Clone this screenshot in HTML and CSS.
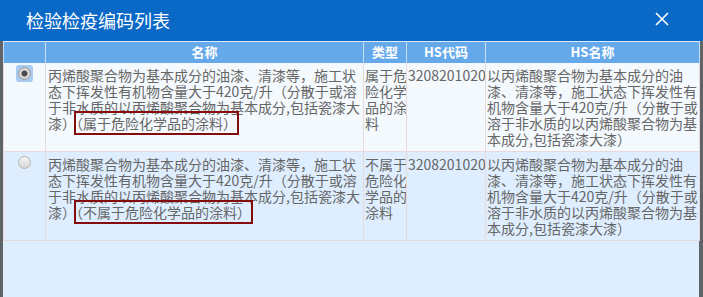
FILE: index.html
```html
<!DOCTYPE html>
<html lang="zh-CN">
<head>
	<meta charset="UTF-8">
	<title>检验检疫编码列表</title>
	<link rel="stylesheet" href="styles.css">
</head>
<body>

	<!-- Janela de diálogo -->
	<div class="dialogo">

		<div class="titulo">
			<span class="titulo-texto">检验检疫编码列表</span>
			<svg class="fechar" width="14" height="14" viewBox="0 0 14 14">
				<path d="M1 1 L13 13 M13 1 L1 13" stroke="#ffffff" stroke-width="1.6" fill="none"/>
			</svg>
		</div>

		<div class="corpo">
			<table class="grade">
				<colgroup>
					<col class="c-radio">
					<col class="c-nome">
					<col class="c-tipo">
					<col class="c-codigo">
					<col class="c-hsnome">
				</colgroup>
				<thead>
					<tr>
						<th></th>
						<th>名称</th>
						<th>类型</th>
						<th>HS代码</th>
						<th>HS名称</th>
					</tr>
				</thead>
				<tbody>
					<tr class="linha clara">
						<td class="radio-celula"><span class="anel"><span class="radio marcado"></span></span></td>
						<td>丙烯酸聚合物为基本成分的油漆、清漆等，施工状<br>态下挥发性有机物含量大于420克/升（分散于或溶<br>于非水质的以丙烯酸聚合物为基本成分,包括瓷漆大<br>漆）<span class="destaque">（属于危险化学品的涂料）</span></td>
						<td>属于危<br>险化学<br>品的涂<br>料</td>
						<td>3208201020</td>
						<td>以丙烯酸聚合物为基本成分的油<br>漆、清漆等，施工状态下挥发性有<br>机物含量大于420克/升（分散于或<br>溶于非水质的以丙烯酸聚合物为基<br>本成分,包括瓷漆大漆）</td>
					</tr>
					<tr class="linha azul">
						<td class="radio-celula"><span class="anel vazio"><span class="radio"></span></span></td>
						<td>丙烯酸聚合物为基本成分的油漆、清漆等，施工状<br>态下挥发性有机物含量大于420克/升（分散于或溶<br>于非水质的以丙烯酸聚合物为基本成分,包括瓷漆大<br>漆）<span class="destaque">（不属于危险化学品的涂料）</span></td>
						<td>不属于<br>危险化<br>学品的<br>涂料</td>
						<td>3208201020</td>
						<td>以丙烯酸聚合物为基本成分的油<br>漆、清漆等，施工状态下挥发性有<br>机物含量大于420克/升（分散于或<br>溶于非水质的以丙烯酸聚合物为基<br>本成分,包括瓷漆大漆）</td>
					</tr>
				</tbody>
			</table>
		</div>
	</div>

</body>
</html>
```

FILE: styles.css
```css
	* {
		box-sizing: border-box;
	}

	body {
		margin: 0;
		background-color: #5f6468;
		font-family: "Noto Sans CJK SC", "Noto Sans", sans-serif;
	}

	div.dialogo {
		width: 703px;
		height: 297px;
		display: flex;
		flex-direction: column;
		overflow: hidden;
	}

	/* barra do título */
	div.titulo {
		height: 41px;
		background-color: #0a68c6;
		display: flex;
		align-items: center;
		justify-content: space-between;
		padding: 0 34px 0 26px;
	}

	span.titulo-texto {
		color: #ffffff;
		font-size: 18px;
		line-height: 20px;
		margin-top: -2px;
	}

	svg.fechar {
		display: block;
		margin-top: -3px;
	}

	div.corpo {
		flex: 1;
		margin: 0 4px 0 3px;
		background-color: #dfeeff;
	}

	table.grade {
		width: 696px;
		border-collapse: collapse;
		table-layout: fixed;
		font-size: 14px;
		line-height: 16px;
		color: #666666;
	}

	col.c-radio { width: 42px; }
	col.c-nome { width: 318px; }
	col.c-tipo { width: 43px; }
	col.c-codigo { width: 79px; }
	col.c-hsnome { width: 214px; }

	table.grade th {
		height: 21px;
		padding: 0;
		background-color: #66a9ea;
		color: #ffffff;
		font-size: 13px;
		font-weight: bold;
		line-height: 20px;
		text-align: center;
		border-top: 1px solid #dcebfa;
		border-left: 1px solid #c6def6;
		border-right: 1px solid #c6def6;
	}

	table.grade td {
		vertical-align: top;
		padding: 4px 1px 4px 1px;
		white-space: nowrap;
		overflow: hidden;
		border: 1px solid #e6d9d9;
		border-top: none;
	}

	table.grade td:nth-child(2) {
		padding-left: 2px;
	}

	tr.clara {
		background-color: #f4f9fe;
		height: 89px;
	}

	tr.azul {
		background-color: #deeeff;
		height: 89px;
	}

	/* botão de rádio desenhado */
	td.radio-celula {
		text-align: center;
	}

	span.anel {
		display: inline-block;
		padding: 2px;
		border-radius: 3px;
		background-color: #a9cbf3;
		margin-top: -2px;
	}

	span.anel.vazio {
		background-color: transparent;
	}

	span.radio {
		display: block;
		width: 13px;
		height: 13px;
		border-radius: 50%;
		border: 1px solid #b4b4b4;
		background: linear-gradient(#f4f4f4, #d6d6d6);
	}

	span.radio.marcado {
		border-color: #9a9a9a;
		background: radial-gradient(circle, #4a4a4a 0, #4a4a4a 2.5px, #dcdcdc 3.5px, #c8c8c8 100%);
	}

	/* moldura vermelha */
	span.destaque {
		outline: 2px solid #840c0c;
		outline-offset: 0;
	}
```
